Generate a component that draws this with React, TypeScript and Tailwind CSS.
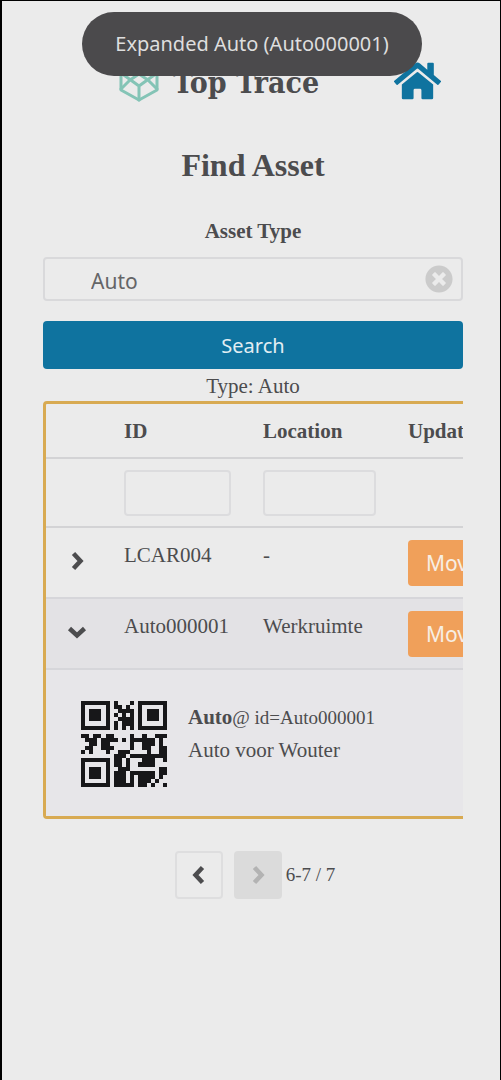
import { useState } from "react";
import { FaHome, FaTimesCircle } from "react-icons/fa";

const QR_ROWS = [
  "#######.#...#.#######",
  "#.....#.##.#..#.....#",
  "#.###.#..####.#.###.#",
  "#.###.#.#.#.#.#.###.#",
  "#.###.#..####.#.###.#",
  "#.....#.#.###.#.....#",
  "#######.#.#.#.#######",
  ".....................",
  "##.##.##....#..#..###",
  ".###.####.#.######.#.",
  "..##.##.....#..###.#.",
  ".##..###....#..##..##",
  "#.#...#..###....#..##",
  "........###.#########",
  "#######.##.#...###..#",
  "#.....#.##.#..####...",
  "#.###.#..###.......##",
  "#.###.#.###.######.##",
  "#.###.#.###.#.####.#.",
  "#.....#.###.#.###.#..",
  "#######.#####.##.#..#",
];

function QrCode() {
  const path = QR_ROWS.flatMap((row, y) =>
    [...row].map((cell, x) => (cell === "#" ? `M${x} ${y}h1v1h-1z` : "")),
  ).join("");
  return (
    <svg
      viewBox="0 0 21 21"
      className="size-[86px] shrink-0 fill-[#171719]"
      shapeRendering="crispEdges"
      role="img"
      aria-label="QR code"
    >
      <path d={path} />
    </svg>
  );
}

function Logo() {
  return (
    <svg
      viewBox="0 0 40 44"
      className="h-11 w-10 fill-none stroke-[#84c4b6]"
      strokeWidth="3"
      strokeLinejoin="round"
      strokeLinecap="round"
      aria-hidden="true"
    >
      <path d="M20 2 38 12v19L20 41 2 31V12z" />
      <path d="M2 14l18 13L38 14M2 30l9-9 9-6 9 6 9 9M20 27v14M20 2v13" />
    </svg>
  );
}

const CHEVRONS = {
  left: "M13.5 2.5 6.5 10l7 7.5",
  right: "M6.5 2.5l7 7.5-7 7.5",
  down: "M2.5 6.5 10 13.5l7.5-7",
};

function Chevron({ direction }: { direction: keyof typeof CHEVRONS }) {
  return (
    <svg
      viewBox="0 0 20 20"
      className="size-5 fill-none stroke-current"
      strokeWidth="4.5"
      aria-hidden="true"
    >
      <path d={CHEVRONS[direction]} />
    </svg>
  );
}

function AssetRow({
  id,
  location,
  open = false,
}: {
  id: string;
  location: string;
  open?: boolean;
}) {
  return (
    <tr
      className={
        open
          ? "h-[71px] border-b-2 border-[#d6d6da] bg-[#e3e2e5]"
          : "h-[71px] border-b-2 border-[#d6d6da]"
      }
    >
      <td className="pb-1 pl-[21px] align-middle">
        <button
          type="button"
          aria-label={`Toggle ${id}`}
          aria-expanded={open}
          className="block"
        >
          <Chevron direction={open ? "down" : "right"} />
        </button>
      </td>
      <td className="px-4 pt-[13px] align-top">{id}</td>
      <td className="px-4 pt-[13px] align-top">{location}</td>
      <td className="px-4 pt-3 align-top">
        <button
          type="button"
          className="block h-[46px] rounded bg-[#f0a05a] px-[18px] font-['Noto_Sans',sans-serif] text-[21px] text-[#f7eee4]"
        >
          Move
        </button>
      </td>
    </tr>
  );
}

export default function App() {
  const [assetType, setAssetType] = useState("Auto");
  return (
    <div className="relative min-h-screen border-t border-r border-l-2 border-black bg-[#ebebeb] pr-[37px] pl-[41px] font-['Liberation_Serif',serif] text-[21px] leading-7 text-[#4c4c4e]">
      <div className="absolute inset-x-0 top-[11px] flex justify-center">
        <div
          role="status"
          className="ml-0.5 flex h-16 items-center rounded-full bg-[#4b4a4c] px-[33px] font-['Noto_Sans',sans-serif] text-[20px] text-[#dedede]"
        >
          Expanded Auto (Auto000001)
        </div>
      </div>

      <header className="flex items-center pt-[58px] pr-[22px] pl-[76px]">
        <Logo />
        <span className="ml-3.5 pt-1 font-['DejaVu_Serif_Condensed','DejaVu_Serif',serif] text-[30px] font-bold whitespace-nowrap">
          Top Trace
        </span>
        <a href="#" aria-label="Home" className="ml-auto text-[#0f739f]">
          <FaHome className="h-[42px] w-[47px]" />
        </a>
      </header>

      <main>
        <h1 className="mt-11 text-center text-[32px] leading-9 font-bold">
          Find Asset
        </h1>

        <form onSubmit={(event) => event.preventDefault()}>
          <label
            htmlFor="asset-type"
            className="mt-[34px] block text-center font-bold"
          >
            Asset Type
          </label>
          <div className="mt-3 flex h-11 items-center rounded border-2 border-[#d9d9db] pr-2">
            <input
              id="asset-type"
              value={assetType}
              onChange={(event) => setAssetType(event.target.value)}
              className="h-full min-w-0 flex-1 bg-transparent pt-1 pl-[46px] font-['Noto_Sans',sans-serif] text-[21px] text-[#656567] outline-none"
            />
            <button
              type="button"
              aria-label="Clear"
              onClick={() => setAssetType("")}
              className="text-[#cbcbcb]"
            >
              <FaTimesCircle className="size-7" />
            </button>
          </div>
          <button
            type="submit"
            className="mt-5 block h-12 w-full rounded bg-[#0f739f] pt-0.5 font-['Noto_Sans',sans-serif] text-[20px] text-[#e2eef3]"
          >
            Search
          </button>
        </form>

        <p className="mt-[3px] text-center">Type: Auto</p>

        <div className="mt-px overflow-hidden">
          <div className="w-[540px] rounded border-3 border-[#d8aa52]">
            <table className="w-full table-fixed border-collapse text-left">
              <colgroup>
                <col className="w-[62px]" />
                <col className="w-[139px]" />
                <col className="w-[145px]" />
                <col />
              </colgroup>
              <thead>
                <tr className="h-[54px] border-b-2 border-[#d3d3d5]">
                  <td />
                  <th className="px-4">ID</th>
                  <th className="px-4">Location</th>
                  <th className="px-4">Update</th>
                </tr>
                <tr className="h-[69px] border-b-2 border-[#d3d3d5]">
                  <td />
                  <td className="px-4">
                    <input
                      aria-label="Filter by ID"
                      className="block h-[46px] w-full rounded border-2 border-[#dcdcde] px-2"
                    />
                  </td>
                  <td className="px-4">
                    <input
                      aria-label="Filter by location"
                      className="block h-[46px] w-full rounded border-2 border-[#dcdcde] px-2"
                    />
                  </td>
                  <td />
                </tr>
              </thead>
              <tbody>
                <AssetRow id="LCAR004" location="-" />
                <AssetRow id="Auto000001" location="Werkruimte" open />
                <tr className="bg-[#e7e6e9]">
                  <td colSpan={4} className="px-[35px] pt-[31px] pb-[29px]">
                    <div className="flex gap-[21px]">
                      <QrCode />
                      <div className="leading-8">
                        <p>
                          <b>Auto</b>
                          <span className="text-[19px]">@ id=Auto000001</span>
                        </p>
                        <p>Auto voor Wouter</p>
                      </div>
                    </div>
                  </td>
                </tr>
              </tbody>
            </table>
          </div>
        </div>

        <nav
          aria-label="Pages"
          className="mt-8 flex items-center justify-center pl-1 text-[19px]"
        >
          <button
            type="button"
            aria-label="Previous page"
            className="flex size-12 items-center justify-center rounded border-2 border-[#dededf]"
          >
            <Chevron direction="left" />
          </button>
          <button
            type="button"
            aria-label="Next page"
            disabled
            className="ml-[11px] flex size-12 items-center justify-center rounded-sm bg-[#dbdbdb] text-[#b3b3b3]"
          >
            <Chevron direction="right" />
          </button>
          <span className="ml-1">6-7 / 7</span>
        </nav>
      </main>
    </div>
  );
}
